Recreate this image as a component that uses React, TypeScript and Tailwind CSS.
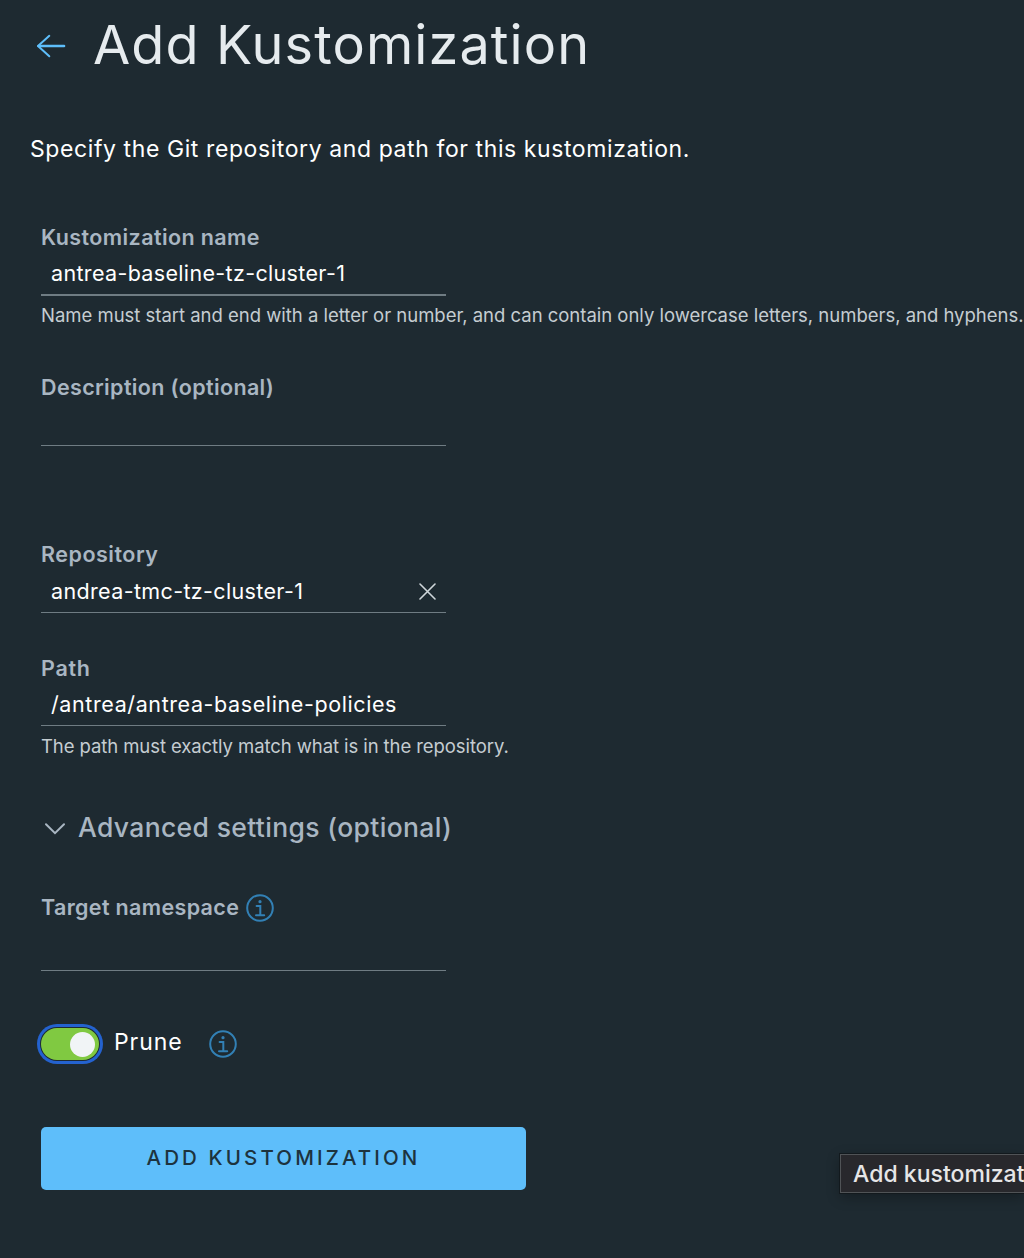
import type { ReactNode } from 'react';

function InfoIcon({ className = '' }: { className?: string }) {
  return (
    <svg
      viewBox="0 0 28 28"
      className={`h-7 w-7 shrink-0 text-[#3280b5] ${className}`}
      fill="none"
      stroke="currentColor"
      aria-hidden="true"
    >
      <circle cx="14" cy="14" r="12.8" strokeWidth="2" />
      <circle cx="14" cy="7.7" r="1.6" fill="currentColor" stroke="none" />
      <path d="M10.6 12h3.7v9M10 21.2h8.2" strokeWidth="2" strokeLinecap="round" />
    </svg>
  );
}

function Label({ children, spacing }: { children: ReactNode; spacing: string }) {
  return (
    <div
      className={`flex h-[30px] items-center text-[21.5px] leading-[30px] font-semibold whitespace-nowrap text-[#a9b6c2] ${spacing}`}
    >
      {children}
    </div>
  );
}

function Help({ children, spacing }: { children: ReactNode; spacing: string }) {
  return (
    <p className={`h-[30px] text-[18.5px] leading-[30px] whitespace-nowrap text-[#c5cdd1] ${spacing}`}>
      {children}
    </p>
  );
}

export default function App() {
  return (
    <main className="h-[1258px] w-full overflow-hidden bg-[#1e2a31] font-[Inter,sans-serif] text-white">
      <header className="flex h-[90px] items-center pl-9">
        <svg viewBox="0 0 30 24" className="mt-[2px] h-6 w-[30px] text-[#5ebefa]" fill="none" stroke="currentColor" aria-hidden="true">
          <path d="M28 12H2.5" strokeWidth="2.6" strokeLinecap="round" />
          <path d="M13.3 1.8L2 12l11.3 10.3" strokeWidth="2" strokeLinecap="round" strokeLinejoin="round" />
        </svg>
        <h1 className="ml-[27px] text-[54px] leading-[60px] font-normal tracking-[1.1px] whitespace-nowrap text-[#e6ebee]">
          Add Kustomization
        </h1>
      </header>

      <p className="mt-[44px] ml-[30px] h-[30px] text-[23px] leading-[30px] tracking-[0.59px] whitespace-nowrap">
        Specify the Git repository and path for this kustomization.
      </p>

      <form className="mt-[58px] ml-[41px]">
        <section>
          <Label spacing="tracking-[0.4px]">Kustomization name</Label>
          <div className="flex h-[44px] w-[405px] items-center border-b-2 border-[#6f7c83] pt-px pl-[10px] text-[21.5px] tracking-[0.34px]">
            antrea-baseline-tz-cluster-1
          </div>
          <Help spacing="mt-[4px] tracking-[-0.015px]">
            Name must start and end with a letter or number, and can contain only lowercase letters, numbers, and hyphens.
          </Help>
        </section>

        <section className="mt-[42px]">
          <Label spacing="tracking-[0.36px]">Description (optional)</Label>
          <div className="h-[44px] w-[405px] border-b border-[#6f7c83]" />
        </section>

        <section className="mt-[93px]">
          <Label spacing="tracking-[0.5px]">Repository</Label>
          <div className="flex h-[44px] w-[405px] items-center justify-between border-b border-[#6f7c83] px-[10px] pt-px text-[21.5px] tracking-[0.36px]">
            <span>andrea-tmc-tz-cluster-1</span>
            <svg viewBox="0 0 17 17" className="h-[17px] w-[17px] text-[#cfd6da]" fill="none" stroke="currentColor" aria-hidden="true">
              <path d="M1 1l15 15M16 1L1 16" strokeWidth="1.6" strokeLinecap="round" />
            </svg>
          </div>
        </section>

        <section className="mt-[40px]">
          <Label spacing="tracking-[0.7px]">Path</Label>
          <div className="flex h-[43px] w-[405px] items-center border-b border-[#6f7c83] pl-[10px] text-[21.5px] tracking-[0.6px]">
            /antrea/antrea-baseline-policies
          </div>
          <Help spacing="mt-[5px] tracking-[-0.08px]">The path must exactly match what is in the repository.</Help>
        </section>

        <div className="mt-[48px] flex h-9 items-center text-[#a9b6c2]">
          <svg viewBox="0 0 20 12" className="mt-[3px] ml-[4px] h-3 w-5" fill="none" stroke="currentColor" aria-hidden="true">
            <path d="M1 1.2l9 9 9-9" strokeWidth="2" strokeLinecap="round" />
          </svg>
          <h2 className="ml-[13px] text-[26.5px] leading-9 font-medium tracking-[0.35px] whitespace-nowrap">
            Advanced settings (optional)
          </h2>
        </div>

        <section className="mt-[47px]">
          <Label spacing="tracking-[0.34px]">
            Target namespace
            <InfoIcon className="mt-[2px] ml-[7px]" />
          </Label>
          <div className="h-[49px] w-[405px] border-b border-[#6f7c83]" />
        </section>

        <div className="mt-[57px] flex h-[32px] items-center">
          <div className="flex h-[32px] w-[58px] items-center justify-end rounded-full bg-[#80c941] pr-[4px] shadow-[0_0_0_1px_#1e2a31,0_0_0_4px_#2462cf]">
            <span className="h-[25px] w-[25px] rounded-full bg-[#f1f4f6]" />
          </div>
          <span className="-mt-[4px] ml-[15px] w-[68px] text-[23px] leading-[30px] tracking-[0.9px]">Prune</span>
          <InfoIcon className="ml-[27px]" />
        </div>

        <div className="mt-[67px] flex h-[63px] w-[485px] items-center justify-center rounded-[5px] bg-[#5ebefa] text-[20.5px] font-medium tracking-[3.12px] text-[#1d333e]">
          ADD KUSTOMIZATION
        </div>
      </form>

      <div className="absolute top-[1154px] left-[840px] flex h-[39px] w-[184px] items-center overflow-hidden border border-r-0 border-[#505356] bg-[#28282c] pt-px pl-3 text-[23px] font-medium tracking-[0.02px] whitespace-nowrap text-[#e6e6e7] shadow-[0_4px_14px_rgba(0,0,0,0.3)] outline-1 outline-[#12191d]">
        Add kustomizat
      </div>
    </main>
  );
}
